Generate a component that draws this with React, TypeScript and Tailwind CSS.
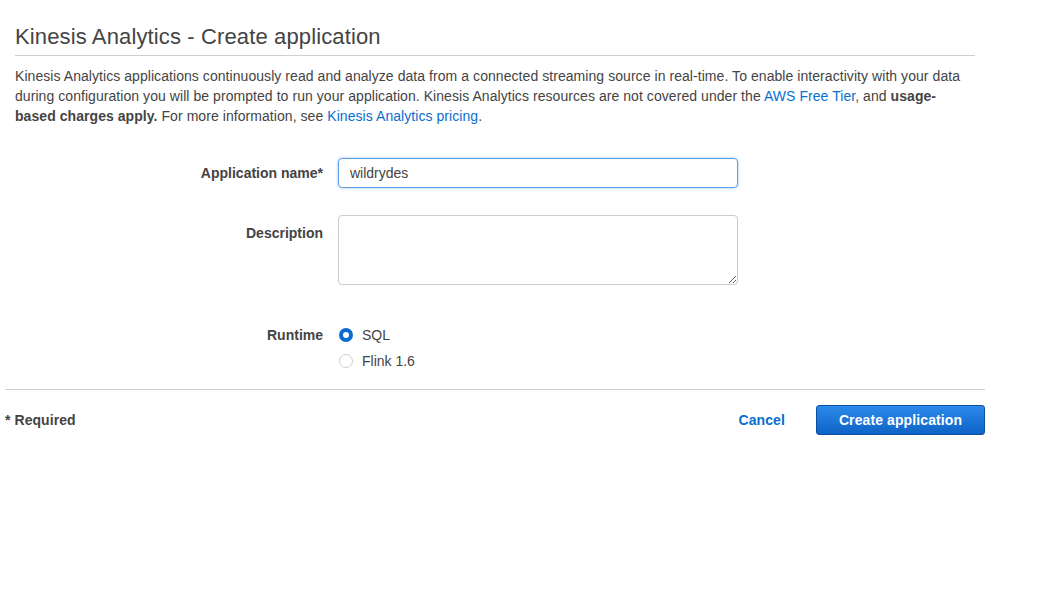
import React, { useState } from 'react';

const font = { fontFamily: '"Helvetica Neue", Helvetica, "Liberation Sans", Arial, sans-serif' };

function Radio({ checked, label, onSelect }: { checked: boolean; label: string; onSelect: () => void }) {
    return (
        <label className="flex items-center h-[26px] cursor-pointer" onClick={onSelect}>
            {checked ? (
                <span className="w-[14px] h-[14px] rounded-full border-[4px] border-[#0a6bd0] bg-white" />
            ) : (
                <span className="w-[14px] h-[14px] rounded-full border border-[#cfcfcf] bg-white" />
            )}
            <span className="ml-[9px] text-[14px] text-[#444]">{label}</span>
        </label>
    );
}

function App() {
    const [name, setName] = useState('wildrydes');
    const [runtime, setRuntime] = useState('sql');

    return (
        <div className="min-h-screen bg-white text-[#444]" style={font}>
            <div className="w-[980px] ml-[5px]">
                <div className="mx-[10px]">
                    <h1 className="text-[22px] leading-[28px] pt-[23px] pb-[4px] border-b border-[#cfcfcf] font-normal tracking-[0.13px] text-[#444]">
                        Kinesis Analytics - Create application
                    </h1>
                    <p className="mt-[10px] text-[14px] leading-[20px] tracking-[0.06px] text-[#444]">
                        Kinesis Analytics applications continuously read and analyze data from a connected streaming source in real-time. To enable interactivity with your data during configuration you will be prompted to run your application. Kinesis Analytics resources are not covered under the{' '}
                        <a href="#" className="text-[#0a6ed0]">AWS Free Tier</a>, and <b>usage-based charges apply.</b> For more information, see{' '}
                        <a href="#" className="text-[#0a6ed0]">Kinesis Analytics pricing</a>.
                    </p>

                    <div className="mt-[32px] grid grid-cols-[308px_400px] gap-x-[15px] text-[14px]">
                        <div className="flex items-center justify-end h-[30px] font-bold">Application name*</div>
                        <input
                            value={name}
                            onChange={e => setName(e.target.value)}
                            className="h-[30px] w-[400px] rounded-[4px] border border-[#5d9ee6] px-[11px] text-[14px] text-[#444] shadow-[0_0_3px_rgba(60,140,230,0.5)] outline-none"
                        />

                        <div className="mt-[27px] pt-[8px] text-right font-bold leading-[20px]">Description</div>
                        <textarea className="mt-[27px] h-[70px] w-[400px] rounded-[4px] border border-[#cccccc] px-[11px] py-[6px] outline-none" />

                        <div className="mt-[37px] h-[26px] flex items-center justify-end font-bold">Runtime</div>
                        <div className="mt-[37px] pl-[1px]">
                            <Radio checked={runtime === 'sql'} label="SQL" onSelect={() => setRuntime('sql')} />
                            <Radio checked={runtime === 'flink'} label="Flink 1.6" onSelect={() => setRuntime('flink')} />
                        </div>
                    </div>
                </div>

                <div className="mt-[15px] border-t border-[#cfcfcf] pt-[15px] flex items-center justify-between">
                    <span className="text-[14px] font-bold tracking-[0.06px] text-[#444]">* Required</span>
                    <div className="flex items-center">
                        <button className="text-[14px] font-bold tracking-[0.1px] text-[#0a6ed0] mr-[31px]">Cancel</button>
                        <button className="h-[30px] w-[169px] rounded-[3px] border border-[#0d4f9f] bg-gradient-to-b from-[#2b8aea] to-[#0e63c6] text-[14px] font-bold tracking-[0.1px] text-white">
                            Create application
                        </button>
                    </div>
                </div>
            </div>
        </div>
    );
}

export default App;
